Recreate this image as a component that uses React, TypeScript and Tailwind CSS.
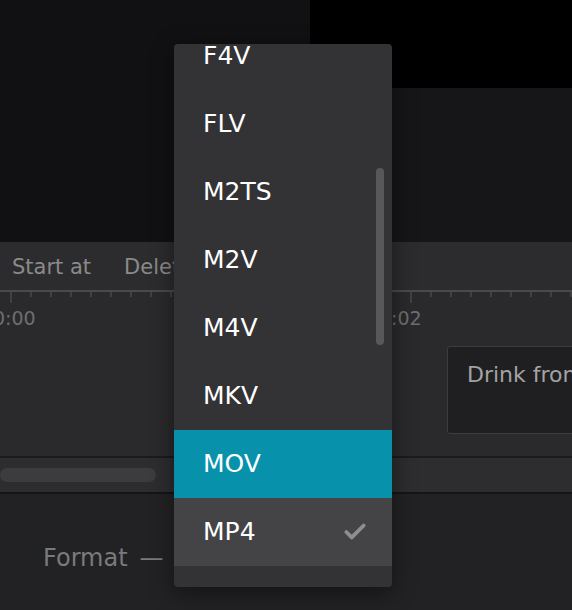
import { Check } from "lucide-react";

const formats = ["F4V", "FLV", "M2TS", "M2V", "M4V", "MKV", "MOV", "MP4"];

function Ruler() {
  const ticks = Array.from({ length: 29 }, (_, i) => 11 + i * 20);
  return (
    <svg width="572" height="14" className="block">
      <line x1="0" y1="1" x2="572" y2="1" stroke="#4a4a4c" strokeWidth="2" />
      {ticks.map((x) => (
        <line
          key={x}
          x1={x}
          y1="1"
          x2={x}
          y2={(x - 11) % 200 === 0 ? 13 : 7}
          stroke="#4a4a4c"
          strokeWidth="1.5"
        />
      ))}
    </svg>
  );
}

function FormatMenu() {
  return (
    <div className="absolute left-[174px] top-[44px] w-[218px] h-[543px] overflow-hidden rounded-[4px] bg-[#333335] shadow-[0_6px_24px_rgba(0,0,0,0.45)]">
      <ul className="-mt-[22px] pb-[21px]">
        {formats.map((f) => (
          <li
            key={f}
            className={
              "flex h-[68px] items-center justify-between pl-[29px] pr-[24px] text-[25px] text-white " +
              (f === "MOV" ? "bg-[#0791ab]" : f === "MP4" ? "bg-[#444446]" : "")
            }
          >
            <span>{f}</span>
            {f === "MP4" && (
              <Check size={26} strokeWidth={3.5} color="#8e8e8e" />
            )}
          </li>
        ))}
      </ul>
      <div className="absolute left-[202px] top-[124px] h-[177px] w-[8px] rounded-full bg-[#58585a]" />
    </div>
  );
}

export default function App() {
  return (
    <div
      className="relative w-[572px] h-[610px] overflow-hidden bg-[#222224]"
      style={{ fontFamily: '"DejaVu Sans", "Noto Sans", sans-serif' }}
    >
      {/* preview */}
      <div className="flex h-[242px]">
        <div className="w-[310px] bg-[#111113]" />
        <div className="flex flex-1 flex-col">
          <div className="h-[88px] bg-black" />
          <div className="flex-1 bg-[#161618]" />
        </div>
      </div>

      {/* toolbar */}
      <div className="flex h-[48px] items-center gap-[33px] bg-[#2c2c2e] px-3 pt-1 text-[21px] text-[#8a8a8a]">
        <span>Start at</span>
        <span>Delete</span>
      </div>

      {/* timeline */}
      <div className="h-[166px] bg-[#2a2a2c]">
        <Ruler />
        <div className="-ml-[7px] mt-[5px] flex text-[19px] leading-none text-[#6e6e6e]">
          <span className="w-[400px]">0:00</span>
          <span className="w-[200px]">0:02</span>
        </div>
        <div className="ml-[447px] mt-[18px] h-[88px] w-[200px] rounded-[3px] border border-[#3c3c3e] bg-[#1f1f21] pl-[19px] pt-[11px] text-[22px] text-[#a3a3a3]">
          Drink from
        </div>
      </div>

      {/* scroll band */}
      <div className="h-[38px] border-y-2 border-t-[#1b1b1d] border-b-[#151517] bg-[#2d2d2f] pt-[10px]">
        <div className="h-[14px] w-[156px] rounded-full bg-[#3c3c3e]" />
      </div>

      {/* bottom */}
      <div className="flex gap-[12px] pl-[43px] pt-[46px] text-[24px] text-[#7a7a7a]">
        <span>Format</span>
        <span>—</span>
      </div>

      <FormatMenu />
    </div>
  );
}
